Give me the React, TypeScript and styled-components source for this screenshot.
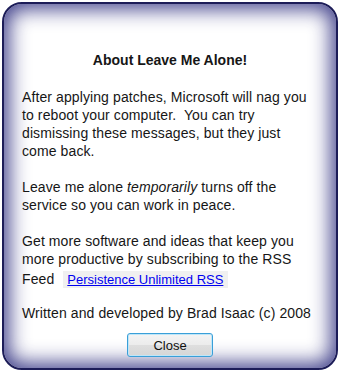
import * as React from 'react'
import styled, { createGlobalStyle } from 'styled-components'

const GlobalStyle = createGlobalStyle`
  html, body {
    margin: 0;
    padding: 0;
    background: #ffffff;
  }
  body {
    font-family: 'Liberation Sans', Arial, sans-serif;
    color: #161616;
  }
`

const Frame = styled.div`
  box-sizing: border-box;
  width: 336px;
  height: 368px;
  margin: 2px;
  border: 2px solid #1c1c58;
  border-radius: 20px;
  background: #ffffff;
  box-shadow: inset 0 0 20px 5px rgba(48, 48, 128, 0.92);
  padding: 47px 18px 0 18px;
  display: flex;
  flex-direction: column;
`

const Title = styled.h1`
  margin: 0 0 19px 0;
  font-size: 14px;
  line-height: 18px;
  font-weight: bold;
  text-align: center;
`

const Para = styled.p<{ $gap?: number }>`
  margin: 0 0 ${(p) => p.$gap ?? 18}px 0;
  font-size: 14px;
  line-height: 18px;
  letter-spacing: 0.1px;
`

const FeedRow = styled.div`
  display: flex;
  align-items: center;
  gap: 9px;
  height: 20px;
  margin-top: 1px;
`

const FeedLink = styled.a`
  display: inline-block;
  background: #f0f0f0;
  padding: 1px 5px 0 4px;
  height: 16px;
  font-size: 13px;
  line-height: 16px;
  letter-spacing: 0;
  color: #0000f0;
  text-decoration: underline;
`

const ButtonRow = styled.div`
  display: flex;
  justify-content: center;
  margin-top: -2px;
`

const CloseButton = styled.button`
  box-sizing: border-box;
  width: 86px;
  height: 24px;
  border: 1px solid #3a9fd8;
  border-radius: 3px;
  background: linear-gradient(#f4f4f4 0%, #ececec 48%, #dedede 52%, #d6d6d6 100%);
  box-shadow: inset 0 0 0 1px #bfe6f8;
  font-family: 'Liberation Sans', Arial, sans-serif;
  font-size: 13px;
  color: #111;
  padding: 0;
`

export default function App() {
  return (
    <>
      <GlobalStyle />
      <Frame>
        <Title>About Leave Me Alone!</Title>
        <Para>
          After applying patches, Microsoft will nag you
          <br />
          to reboot your computer.&nbsp; You can try
          <br />
          dismissing these messages, but they just
          <br />
          come back.
        </Para>
        <Para>
          Leave me alone <i>temporarily</i> turns off the
          <br />
          service so you can work in peace.
        </Para>
        <Para $gap={0}>
          Get more software and ideas that keep you
          <br />
          more productive by subscribing to the RSS
        </Para>
        <Para $gap={15}>
          <FeedRow>
            <span>Feed</span>
            <FeedLink href="#">Persistence Unlimited RSS</FeedLink>
          </FeedRow>
        </Para>
        <Para $gap={13}>Written and developed by Brad Isaac (c) 2008</Para>
        <ButtonRow>
          <CloseButton>Close</CloseButton>
        </ButtonRow>
      </Frame>
    </>
  )
}
